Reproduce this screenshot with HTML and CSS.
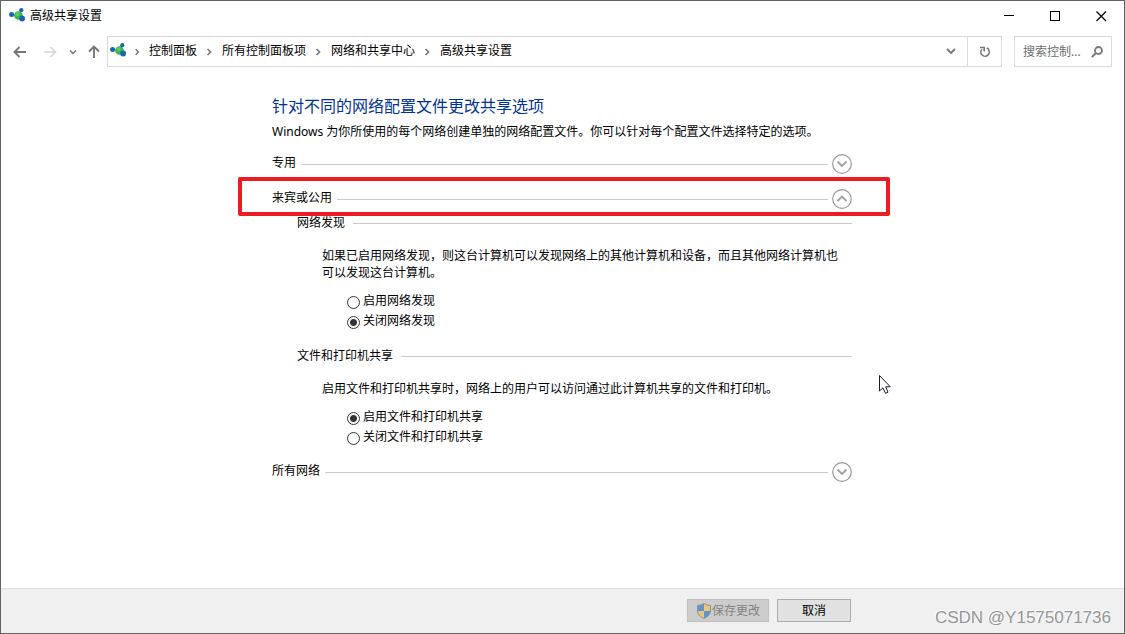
FILE: index.html
```html
<!DOCTYPE html>
<html lang="zh-CN">
<head>
<meta charset="utf-8">
<title>高级共享设置</title>
<link rel="stylesheet" href="styles.css">
</head>
<body>
<svg class="defs" aria-hidden="true">
  <symbol id="net" viewBox="0 0 16 14">
    <path d="M3 6.500L9 7M12 2L10 6M13 10.500L10 8" stroke="#7fb2a0" stroke-width="1"/>
    <circle cx="9.500" cy="7.500" r="4.300" fill="#3cb54a"/>
    <circle cx="8.700" cy="6.300" r="2" fill="#5fcb62"/>
    <circle cx="2.600" cy="6.500" r="2.500" fill="#1766b0"/>
    <circle cx="12.300" cy="2.200" r="2.100" fill="#1766b0"/>
    <circle cx="13.100" cy="10.500" r="2.900" fill="#1766b0"/>
  </symbol>
  <symbol id="sep" viewBox="0 0 25 12"><path d="M10.500 3L13.500 6L10.500 9" fill="none" stroke="#777" stroke-width="1.600"/></symbol>
  <symbol id="down" viewBox="0 0 20 20"><path d="M5.500 7.500L10 12L14.500 7.500" fill="none" stroke="#a0a0a0" stroke-width="1.800"/><circle cx="10" cy="10" r="9.300" fill="none" stroke="#999" stroke-width="1.200"/></symbol>
  <symbol id="up" viewBox="0 0 20 20"><path d="M5.500 12L10 7.500L14.500 12" fill="none" stroke="#a0a0a0" stroke-width="1.800"/><circle cx="10" cy="10" r="9.300" fill="none" stroke="#999" stroke-width="1.200"/></symbol>
</svg>
<div class="window">
  <header class="titlebar">
    <svg class="net-icon"><use href="#net"/></svg>
    <span class="title">高级共享设置</span>
    <button class="win-btn" aria-label="最小化"><svg width="11" height="11"><path d="M0 4.500H10" stroke="#000"/></svg></button>
    <button class="win-btn" aria-label="最大化"><svg width="11" height="11"><rect x=".5" y=".5" width="9" height="9" fill="none" stroke="#000"/></svg></button>
    <button class="win-btn" aria-label="关闭"><svg width="11" height="11"><path d="M.5 .5L10 10M10 .5L.5 10" stroke="#000" stroke-width="1.200"/></svg></button>
  </header>
  <nav class="navbar">
    <button class="nav-btn" aria-label="后退"><svg width="14" height="12"><path d="M1.500 6H13M6.500 1L1.500 6L6.500 11" fill="none" stroke="#777" stroke-width="1.900"/></svg></button>
    <button class="nav-btn" aria-label="前进" disabled><svg width="14" height="12"><path d="M1 6H12.500M7.500 1L12.500 6L7.500 11" fill="none" stroke="#d6d6d6" stroke-width="1.600"/></svg></button>
    <button class="nav-btn narrow" aria-label="最近位置"><svg width="8" height="6"><path d="M1 1.500L4 4.500L7 1.500" fill="none" stroke="#777" stroke-width="1.500"/></svg></button>
    <button class="nav-btn up" aria-label="上移"><svg width="12" height="13"><path d="M6 13V2M1 6.500L6 1.500L11 6.500" fill="none" stroke="#777" stroke-width="1.900"/></svg></button>
    <div class="address">
      <svg class="net-icon"><use href="#net"/></svg>
      <svg class="sep first"><use href="#sep"/></svg>
      <a href="#">控制面板</a>
      <svg class="sep"><use href="#sep"/></svg>
      <a href="#">所有控制面板项</a>
      <svg class="sep"><use href="#sep"/></svg>
      <a href="#">网络和共享中心</a>
      <svg class="sep"><use href="#sep"/></svg>
      <a href="#">高级共享设置</a>
      <button class="history" aria-label="以前的位置"><svg width="10" height="7"><path d="M1 1L5 5L9 1" fill="none" stroke="#777" stroke-width="1.900"/></svg></button>
      <button class="refresh" aria-label="刷新"><svg width="12" height="12"><path d="M3 3.200A4.200 4.200 0 1 0 9.200 3.300M1 1.500H5.200V5.500M8 1.800L10 3.600" fill="none" stroke="#777" stroke-width="1.600"/></svg></button>
    </div>
    <form class="search">
      <input type="text" aria-label="搜索控制面板" placeholder="搜索控制...">
      <svg width="12" height="12"><circle cx="7.500" cy="4.500" r="3.500" fill="none" stroke="#777" stroke-width="1.800"/><path d="M5 7L.8 11.200" stroke="#777" stroke-width="1.900"/></svg>
    </form>
  </nav>
  <main class="content">
    <h1>针对不同的网络配置文件更改共享选项</h1>
    <p class="intro">Windows 为你所使用的每个网络创建单独的网络配置文件。你可以针对每个配置文件选择特定的选项。</p>
    <section class="profile">
      <h2>专用</h2><span class="rule"></span>
      <button class="toggle" aria-label="展开专用" aria-expanded="false"><svg><use href="#down"/></svg></button>
    </section>
    <section class="profile current">
      <h2>来宾或公用</h2><span class="rule"></span>
      <button class="toggle" aria-label="折叠来宾或公用" aria-expanded="true"><svg><use href="#up"/></svg></button>
    </section>
    <div class="settings">
      <section class="setting">
        <div class="setting-head"><h3>网络发现</h3><span class="rule"></span></div>
        <p>如果已启用网络发现，则这台计算机可以发现网络上的其他计算机和设备，而且其他网络计算机也可以发现这台计算机。</p>
        <div class="options">
          <label><input type="radio" name="discovery"><span>启用网络发现</span></label>
          <label><input type="radio" name="discovery" checked><span>关闭网络发现</span></label>
        </div>
      </section>
      <section class="setting">
        <div class="setting-head"><h3>文件和打印机共享</h3><span class="rule"></span></div>
        <p>启用文件和打印机共享时，网络上的用户可以访问通过此计算机共享的文件和打印机。</p>
        <div class="options">
          <label><input type="radio" name="sharing" checked><span>启用文件和打印机共享</span></label>
          <label><input type="radio" name="sharing"><span>关闭文件和打印机共享</span></label>
        </div>
      </section>
    </div>
    <section class="profile">
      <h2>所有网络</h2><span class="rule"></span>
      <button class="toggle" aria-label="展开所有网络" aria-expanded="false"><svg><use href="#down"/></svg></button>
    </section>
  </main>
  <footer class="footer">
    <div class="actions">
      <button class="action save" disabled>
        <svg width="16" height="16"><path d="M8 .5Q5 2.500 1.500 2.500V8Q2 13 8 15.500Q14 13 14.500 8V2.500Q11 2.500 8 .5Z" fill="#e9c77f"/><path d="M8 .5Q5 2.500 1.500 2.500V8H8ZM8 8H14.500Q14 13 8 15.500Z" fill="#5f97cb"/><path d="M8 .5Q5 2.500 1.500 2.500V8Q2 13 8 15.500Q14 13 14.500 8V2.500Q11 2.500 8 .5Z" fill="none" stroke="#8d9196"/></svg>
        <span>保存更改</span>
      </button>
      <button class="action cancel">取消</button>
    </div>
  </footer>
</div>
<svg class="cursor" width="13" height="21" aria-hidden="true"><path d="M1.500 1.500V17L5 13.800L7.500 19.300L10 18.200L7.700 12.800H12.300Z" fill="#fff" stroke="#1a1a2a"/></svg>
<span class="watermark">CSDN @Y1575071736</span>
</body>
</html>
```
FILE: styles.css
```css
* { box-sizing: border-box; }
body {
  margin: 0;
  position: relative;
  font: 12px/18px "Noto Sans", "Noto Sans CJK SC", sans-serif;
  color: #000;
  background: #fff;
}
h1, h2, h3, p { margin: 0; font-weight: 400; }
button, input { font: inherit; color: inherit; margin: 0; }
button { padding: 0; border: 0; background: none; display: flex; align-items: center; justify-content: center; }
svg { display: block; flex: none; }
.defs { position: absolute; width: 0; height: 0; }

.window {
  min-height: 100vh;
  display: flex;
  flex-direction: column;
  border: 1px solid #626262;
}

.titlebar { display: flex; align-items: center; height: 30px; padding-left: 8px; }
.titlebar .net-icon { margin-bottom: 3px; }
.net-icon { width: 16px; height: 14px; }
.title { flex: 1; padding-left: 5px; }
.win-btn { width: 46px; height: 28px; }

.navbar { display: flex; align-items: stretch; height: 31px; margin-top: 5px; padding: 0 12px 0 4px; }
.nav-btn { width: 30px; }
.nav-btn.narrow { width: 16px; }
.nav-btn.up { width: 26px; }
.address { flex: 1; display: flex; align-items: center; border: 1px solid #d9d9d9; padding-left: 2px; }
.address a { color: #000; text-decoration: none; padding-bottom: 2px; }
.address .net-icon { margin-bottom: 3px; }
.sep { width: 25px; height: 12px; }
.sep.first { width: 23px; }
.history { width: 32px; align-self: stretch; margin-left: auto; }
.refresh { width: 34px; align-self: stretch; border-left: 1px solid #d9d9d9; }
.search { width: 98px; margin-left: 12px; display: flex; align-items: center; border: 1px solid #d9d9d9; padding: 0 8px 0 8px; }
.search input { flex: 1; min-width: 0; border: 0; padding: 0; outline: 0; background: none; }
.search input::placeholder { color: #6d6d6d; opacity: 1; }

.content, .actions { width: 100%; max-width: 581px; margin: 0 auto; padding-right: 1px; }
.content { flex: 1; padding-top: 27px; padding-bottom: 32px; }
h1 { font-size: 16px; line-height: 24px; color: #003399; }
h2, h3 { font-size: 12px; }
.intro { margin: 5px 0 13px; white-space: nowrap; }
.profile { display: flex; align-items: center; gap: 5px; height: 20px; position: relative; }
.profile h2 { padding-bottom: 2px; }
.rule { flex: 1; height: 1px; background: #cacaca; }
.toggle, .toggle svg { width: 20px; height: 20px; }
.profile .toggle { margin-left: -1px; }
.current { margin: 15px 0 5px; }
.current::after {
  content: "";
  position: absolute;
  inset: -12px -38px -7px -34px;
  border: 4px solid #ed1c24;
  border-radius: 2px;
  pointer-events: none;
}
.settings { padding-left: 25px; }
.setting { margin-bottom: 15px; }
.setting:last-child { margin-bottom: 14px; }
.setting-head { display: flex; align-items: center; gap: 8px; }
.setting p { padding: 15px 0 11px 25px; line-height: 17px; width: 545px; }
.options { padding-left: 50px; }
.options label { display: flex; align-items: center; gap: 3px; height: 20px; }
.options span { padding-bottom: 2px; }
.options input {
  appearance: none;
  width: 13px;
  height: 13px;
  border: 1px solid #333;
  border-radius: 50%;
  background: #fff;
}
.options input:checked { background: radial-gradient(circle, #333 3px, #fff 4px); }

.footer { border-top: 1px solid #dfdfdf; background: #f0f0f0; padding: 10px 0 11px; }
.actions { padding-right: 2px; display: flex; justify-content: flex-end; gap: 8px; }
.action { height: 23px; border: 1px solid #adadad; background: #e1e1e1; }
.save { width: 82px; border-color: #bfbfbf; background: #cccccc; color: #838383; }
.cancel { width: 74px; }

.cursor { position: absolute; left: 878px; top: 374px; }
.watermark {
  position: absolute;
  right: 14px;
  bottom: 6px;
  font: 17px/20px "Liberation Sans", sans-serif;
  color: #969696;
  text-shadow: -1px -1px 0 #fff;
}
```
